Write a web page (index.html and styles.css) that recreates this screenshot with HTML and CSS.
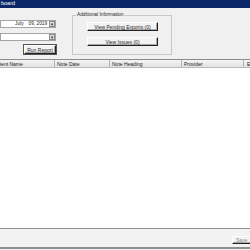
FILE: index.html
```html
<!DOCTYPE html>
<html>
<head>
<meta charset="utf-8">
<link rel="stylesheet" href="styles.css">
</head>
<body>
<div class="window">
  <div class="titlebar">board</div>
  <div class="top">
    <div class="left">
      <div class="combo date">
        <span class="val"><span class="m">July</span><span class="d">09, 2019</span></span>
        <span class="arrow">▾</span>
      </div>
      <div class="combo">
        <span class="val"></span>
        <span class="arrow">▾</span>
      </div>
      <div class="btnrow"><button class="btn run">Run Report</button></div>
    </div>
    <fieldset class="group">
      <legend>Additional Information</legend>
      <button class="btn wide first">View Pending Exports (0)</button>
      <button class="btn wide">View Issues (0)</button>
    </fieldset>
  </div>
  <div class="grid">
    <div class="head">
      <div class="col c1">ient Name</div>
      <div class="col c2">Note Date</div>
      <div class="col c3">Note Heading</div>
      <div class="col c4">Provider</div>
      <div class="col c5">E</div>
    </div>
    <div class="rows"></div>
  </div>
  <div class="footer">
    <button class="btn save">Save</button>
  </div>
</div>
</body>
</html>
```

FILE: styles.css
```css
* { box-sizing: border-box; }
html, body { margin: 0; padding: 0; }
body {
  width: 250px;
  height: 250px;
  overflow: hidden;
  background: #f0f0f0;
  font-family: "Liberation Sans", "DejaVu Sans", sans-serif;
  font-size: 5px;
  color: #222;
}
.window { display: flex; flex-direction: column; height: 250px; }
.titlebar {
  height: 8px;
  background: #0b2768;
  color: #fff;
  font-size: 5.5px;
  line-height: 7px;
  padding-left: 1px;
}
.top {
  height: 50px;
  display: flex;
  align-items: flex-start;
}
.left {
  width: 72px;
  padding-top: 12px;
  padding-right: 16px;
  display: flex;
  flex-direction: column;
  gap: 5px;
}
.combo {
  height: 8px;
  background: #fff;
  border: 1px solid #a5a5a5;
  display: flex;
  justify-content: space-between;
  align-items: center;
}
.combo .val { flex: 1; display: flex; font-size: 4.8px; line-height: 6px; white-space: nowrap; overflow: hidden; }
.combo .m { margin-left: 14px; }
.combo .d { margin-left: 5px; }
.combo .arrow {
  width: 6px;
  height: 6px;
  flex: none;
  background: #e4e4e4;
  border: 1px solid #8a8a8a;
  font-size: 5px;
  line-height: 4px;
  text-align: center;
  color: #333;
}
.btnrow { display: flex; justify-content: flex-end; margin-top: -1px; }
.btn {
  font-family: inherit;
  font-size: 5px;
  color: #222;
  background: #f3f3f3;
  border: 1px solid #fff;
  border-right-color: #222;
  border-bottom-color: #222;
  padding: 0;
  margin: 0;
  white-space: nowrap;
  box-shadow: inset -1px -1px 0 #a8a8a8;
}
.run { width: 32px; height: 9px; outline: 1px solid #555; }
.group {
  margin: 5px 0 0 0;
  padding: 0 0 0 14px;
  width: 100px;
  height: 42px;
  border: 1px solid #c8c8c8;
  display: flex;
  flex-direction: column;
  gap: 6px;
}
.group legend {
  font-size: 4.8px;
  padding: 0 1px;
  margin-left: -11px;
  line-height: 4px;
}
.wide { width: 71px; height: 9px; }
.first { margin-top: 5px; }
.grid { display: flex; flex-direction: column; flex: 1; margin-top: 1px; }
.head {
  height: 9px;
  display: flex;
  background: linear-gradient(#f4f4f4, #e2e2e2);
  border-top: 1px solid #8c8c8c;
  border-bottom: 1px solid #b9b9b9;
}
.col {
  font-size: 5px;
  line-height: 8px;
  border-right: 1px solid #b5b5b5;
  padding-left: 2px;
  white-space: nowrap;
  overflow: hidden;
}
.c1 { width: 55px; padding-left: 0; }
.c2 { width: 55px; }
.c3 { width: 72px; }
.c4 { width: 62px; }
.c5 { flex: 1; border-right: none; padding-left: 3px; }
.rows { flex: 1; background: #fff; }
.footer {
  height: 21px;
  margin-bottom: 1px;
  border-top: 1px solid #8f8f8f;
  border-bottom: 2px solid #8f8f8f;
  background: #f2f2f2;
  display: flex;
  justify-content: flex-end;
  align-items: flex-start;
  padding-top: 7px;
}
.save {
  width: 20px;
  height: 8px;
  margin-right: -2px;
  text-align: left;
  padding-left: 3px;
  color: #888;
}
```
